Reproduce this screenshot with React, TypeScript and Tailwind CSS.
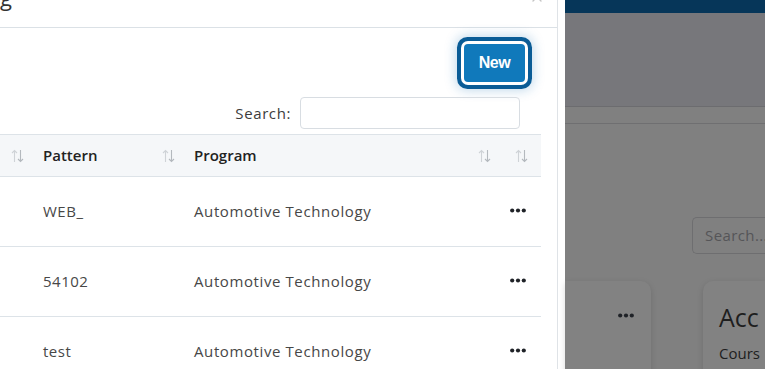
import { X } from "lucide-react";

const font = { fontFamily: '"Open Sans", "Noto Sans", sans-serif' };

const SortIcon = () => (
  <svg width="13" height="14" viewBox="0 0 13 14" fill="none">
    <path d="M3.5 13V1.5M1 4L3.5 1.5L6 4" stroke="#cfd3d7" strokeWidth="1.1" />
    <path d="M9.5 1V12.5M7 10L9.5 12.5L12 10" stroke="#b4b9be" strokeWidth="1.1" />
  </svg>
);

const Dots = () => (
  <svg width="16" height="5" viewBox="0 0 16 5" fill="#1f2227">
    <circle cx="2.2" cy="2.5" r="2.1" />
    <circle cx="8" cy="2.5" r="2.1" />
    <circle cx="13.8" cy="2.5" r="2.1" />
  </svg>
);

const rows = [
  { pattern: "WEB_", program: "Automotive Technology" },
  { pattern: "54102", program: "Automotive Technology" },
  { pattern: "test", program: "Automotive Technology" },
];

export default function App() {
  return (
    <div
      className="w-[765px] h-[369px] flex overflow-hidden bg-[#808080]"
      style={font}
    >
      {/* modal */}
      <div className="w-[565px] shrink-0 flex bg-white">
        <div className="w-[558px] border-r border-[#dfe3e7] flex flex-col">
          <div className="h-[28px] shrink-0 border-b border-[#dbe1e6] flex justify-between">
            <span className="text-[22px] leading-none text-[#333] -mt-[14px]">g</span>
            <X className="w-[16px] h-[16px] text-[#c4c4c4] -mt-[11px] mr-[12px]" strokeWidth={2} />
          </div>

          <div className="pr-[17px] flex flex-col">
            <div className="flex justify-end pt-[16px] pr-[15px]">
              <button className="w-[61px] h-[38px] rounded-[4px] bg-[#1079bb] text-white text-[16px] font-bold tracking-tight shadow-[0_0_0_3px_#ffffff,0_0_0_7px_#0a5c96,0_0_12px_8px_rgba(20,110,180,0.28)]" style={{ fontFamily: '"Liberation Sans", Arial, sans-serif' }}>
                New
              </button>
            </div>

            <div className="flex justify-end items-center gap-[9px] mt-[15px] pr-[20px]">
              <span className="text-[15px] tracking-[0.6px] text-[#3c3c3c]">Search:</span>
              <input className="w-[220px] h-[32px] border border-[#d8dde2] rounded-[4px] outline-none" />
            </div>

            <table className="mt-[5px] w-[541px] table-fixed border-collapse text-[15px]">
              <colgroup>
                <col className="w-[31px]" />
                <col className="w-[151px]" />
                <col className="w-[316px]" />
                <col className="w-[43px]" />
              </colgroup>
              <thead>
                <tr className="h-[42px] bg-[#f5f7f9] border-y border-[#dde3e8]">
                  <th className="p-0">
                    <div className="flex justify-end pr-[7px]"><SortIcon /></div>
                  </th>
                  <th className="p-0 text-left">
                    <div className="flex items-center justify-between pl-[12px] pr-[7px]">
                      <span className="font-semibold text-[#222]">Pattern</span>
                      <SortIcon />
                    </div>
                  </th>
                  <th className="p-0 text-left">
                    <div className="flex items-center justify-between pl-[12px] pr-[7px]">
                      <span className="font-semibold text-[#222]">Program</span>
                      <SortIcon />
                    </div>
                  </th>
                  <th className="p-0">
                    <div className="flex justify-end pr-[13px]"><SortIcon /></div>
                  </th>
                </tr>
              </thead>
              <tbody>
                {rows.map((r, i) => (
                  <tr key={i} className="h-[70px] border-b border-[#dde3e8]">
                    <td />
                    <td className="pl-[12px] text-[#474747] tracking-[0.5px]">{r.pattern}</td>
                    <td className="pl-[12px] text-[#474747] tracking-[0.6px]">{r.program}</td>
                    <td>
                      <div className="flex pl-[12px] -mt-[2px]"><Dots /></div>
                    </td>
                  </tr>
                ))}
              </tbody>
            </table>
          </div>
        </div>
      </div>

      {/* dimmed page behind */}
      <div className="flex-1 flex flex-col bg-[#808080]">
        <div className="h-[13px] shrink-0 bg-[#063659]" />
        <div className="h-[94px] shrink-0 bg-[#77777b] border-b border-[#6c6c6f]" />
        <div className="h-[17px] shrink-0 bg-[#808080] border-b border-[#6f6f71]" />
        <div className="flex justify-end pt-[93px] shrink-0">
          <div className="w-[73px] h-[37px] rounded-l-[5px] border border-r-0 border-[#6e6e70] flex items-center pl-[12px] text-[15px] text-[#555558] tracking-[0.4px]">
            Search...
          </div>
        </div>
        <div className="flex gap-[52px] mt-[27px] shrink-0">
          <div className="w-[86px] h-[120px] rounded-r-[10px] bg-[#828282] shadow-[0_2px_6px_rgba(0,0,0,0.15)] flex justify-end pt-[32px] pr-[17px]">
            <Dots />
          </div>
          <div className="flex-1 h-[120px] rounded-tl-[10px] bg-[#828282] shadow-[0_2px_6px_rgba(0,0,0,0.15)] pl-[16px] pt-[24px]">
            <div className="text-[25px] leading-none text-[#1e1e1e]">Acc</div>
            <div className="text-[15px] text-[#1e1e1e] mt-[12px]">Cours</div>
          </div>
        </div>
      </div>
    </div>
  );
}
